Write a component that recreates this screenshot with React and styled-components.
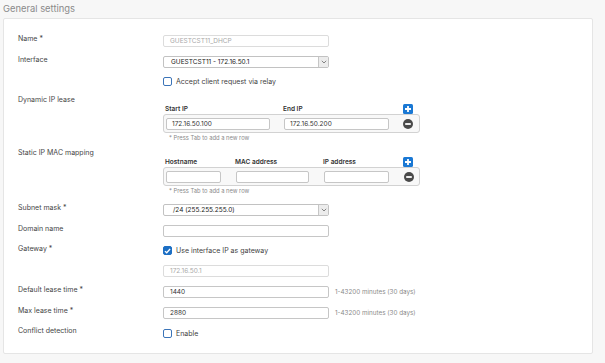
import React from 'react';
import styled, { createGlobalStyle } from 'styled-components';

const GlobalStyle = createGlobalStyle`
  html, body { margin: 0; padding: 0; background: #f7f7f7; }
  body { font-family: Inter, "Noto Sans", "Liberation Sans", sans-serif; }
  * { box-sizing: border-box; }
`;

const Page = styled.div`
  width: 605px;
  height: 363px;
  padding: 0 12px 0 3px;
  display: flex;
  flex-direction: column;
`;

const Title = styled.h2`
  margin: 0;
  height: 18px;
  line-height: 18px;
  font-size: 9.4px;
  font-weight: 400;
  color: #8a8a8a;
`;

const Card = styled.div`
  background: #fff;
  border: 1px solid #e5e5e5;
  border-radius: 2px;
  height: 336px;
  padding: 11px 0 0 14px;
  display: flex;
  flex-direction: column;
`;

const FieldRow = styled.div`
  display: grid;
  grid-template-columns: 145px auto;
  align-items: ${p => (p.$block ? 'start' : 'center')};
  height: ${p => p.$h}px;
  margin-top: ${p => p.$mt || 0}px;
`;

const Label = styled.div`
  font-size: 7px;
  line-height: 10px;
  color: #454545;
  padding-bottom: ${p => (p.$block ? 0 : 4)}px;
`;

const Control = styled.div`
  display: flex;
  align-items: center;
  gap: 6px;
`;

const TextInput = styled.div`
  width: 166px;
  height: 12px;
  border: 1px solid ${p => (p.$disabled ? '#dcdcdc' : '#c6c6c6')};
  border-radius: 2px;
  background: #fff;
  font-size: 6.5px;
  line-height: 10px;
  padding: 0 6px;
  color: ${p => (p.$disabled ? '#a9a9a9' : '#333')};
  white-space: nowrap;
  overflow: hidden;
`;

const SelectBox = styled.div`
  width: 166px;
  height: 12px;
  border: 1px solid #c2c2c2;
  border-radius: 2px;
  background: #fff;
  display: flex;
  align-items: stretch;
  overflow: hidden;
`;

const SelectValue = styled.div`
  flex: 1;
  font-size: 6.5px;
  line-height: 10px;
  padding-left: ${p => p.$indent || 7}px;
  color: #222;
  font-weight: 400;
  white-space: nowrap;
`;

const SelectArrow = styled.div`
  width: 10px;
  background: #ececec;
  border-left: 1px solid #c6c6c6;
  display: flex;
  align-items: center;
  justify-content: center;
`;

const Hint = styled.span`
  font-size: 6.3px;
  color: #8a8a8a;
  white-space: nowrap;
`;

const CheckLabel = styled.label`
  display: flex;
  align-items: center;
  gap: 4px;
  font-size: 7px;
  color: #3f3f3f;
`;

const CheckBox = styled.span`
  width: 9px;
  height: 9px;
  border-radius: 2px;
  border: 1px solid ${p => (p.$checked ? '#1c6fc4' : '#3b74b8')};
  background: ${p => (p.$checked ? '#1c6fc4' : '#fff')};
  display: inline-flex;
  align-items: center;
  justify-content: center;
`;

const Table = styled.div`
  width: 257px;
  padding-top: 8px;
  display: flex;
  flex-direction: column;
`;

const TableGrid = styled.div`
  display: grid;
  grid-template-columns: ${p => p.$cols} 1fr;
  column-gap: ${p => p.$gap}px;
  align-items: center;
`;

const HeaderRow = styled(TableGrid)`
  height: 11px;
  padding: 0 7px 0 2px;
`;

const HeadCell = styled.div`
  font-size: 6.5px;
  font-weight: 600;
  color: #333;
  white-space: nowrap;
`;

const BoxRow = styled(TableGrid)`
  height: 19px;
  border: 1px solid #d2d2d2;
  border-radius: 3px;
  background: #f8f8f8;
  padding: 0 6px 0 2px;
`;

const CellInput = styled.div`
  height: 12px;
  border: 1px solid #c6c6c6;
  border-radius: 2px;
  background: #fff;
  font-size: 6.5px;
  line-height: 10px;
  padding: 0 5px;
  color: #333;
`;

const ActionCell = styled.div`
  display: flex;
  justify-content: flex-end;
`;

const Note = styled.div`
  font-size: 5.8px;
  line-height: 9px;
  color: #8a8a8a;
  padding-left: 6px;
`;

const Chevron = () => (
  <svg width="6" height="4" viewBox="0 0 6 4">
    <path d="M0.8 0.8 L3 3 L5.2 0.8" fill="none" stroke="#777" strokeWidth="0.9" />
  </svg>
);

const Check = () => (
  <svg width="7" height="6" viewBox="0 0 7 6">
    <path d="M0.9 3.1 L2.7 4.8 L6.1 1" fill="none" stroke="#fff" strokeWidth="1.3" />
  </svg>
);

const PlusIcon = () => (
  <svg width="10" height="10" viewBox="0 0 10 10">
    <rect x="0" y="0" width="10" height="10" rx="1.5" fill="#1a78d4" />
    <path d="M5 2 V8 M2 5 H8" stroke="#fff" strokeWidth="1.8" />
  </svg>
);

const MinusIcon = () => (
  <svg width="10" height="10" viewBox="0 0 10 10">
    <circle cx="5" cy="5" r="5" fill="#4a4a4a" />
    <rect x="2.2" y="4.1" width="5.6" height="1.8" fill="#fff" />
  </svg>
);

const Select = ({ value, indent }) => (
  <SelectBox>
    <SelectValue $indent={indent}>{value}</SelectValue>
    <SelectArrow>
      <Chevron />
    </SelectArrow>
  </SelectBox>
);

const CheckField = ({ checked, children }) => (
  <CheckLabel>
    <CheckBox $checked={checked}>{checked && <Check />}</CheckBox>
    {children}
  </CheckLabel>
);

const MultiTable = ({ columns, gap, values }) => {
  const cols = columns.map(c => `${c.width}px`).join(' ');
  return (
    <Table>
      <HeaderRow $cols={cols} $gap={gap}>
        {columns.map(c => (
          <HeadCell key={c.title}>{c.title}</HeadCell>
        ))}
        <ActionCell>
          <PlusIcon />
        </ActionCell>
      </HeaderRow>
      <BoxRow $cols={cols} $gap={gap}>
        {columns.map((c, i) => (
          <CellInput key={c.title}>{values[i]}</CellInput>
        ))}
        <ActionCell>
          <MinusIcon />
        </ActionCell>
      </BoxRow>
      <Note>* Press Tab to add a new row</Note>
    </Table>
  );
};

export default function App() {
  return (
    <>
      <GlobalStyle />
      <Page>
        <Title>General settings</Title>
        <Card>
          <FieldRow $h={21}>
            <Label>Name *</Label>
            <Control>
              <TextInput $disabled>GUESTCST11_DHCP</TextInput>
            </Control>
          </FieldRow>
          <FieldRow $h={21}>
            <Label>Interface</Label>
            <Control>
              <Select value="GUESTCST11 - 172.16.50.1" />
            </Control>
          </FieldRow>
          <FieldRow $h={19}>
            <span />
            <Control>
              <CheckField>Accept client request via relay</CheckField>
            </Control>
          </FieldRow>
          <FieldRow $h={47} $mt={4} $block>
            <Label $block>Dynamic IP lease</Label>
            <MultiTable
              gap={14}
              columns={[
                { title: 'Start IP', width: 104 },
                { title: 'End IP', width: 105 },
              ]}
              values={['172.16.50.100', '172.16.50.200']}
            />
          </FieldRow>
          <FieldRow $h={47} $mt={6} $block>
            <Label $block>Static IP MAC mapping</Label>
            <MultiTable
              gap={15}
              columns={[
                { title: 'Hostname', width: 55 },
                { title: 'MAC address', width: 73 },
                { title: 'IP address', width: 65 },
              ]}
              values={['', '', '']}
            />
          </FieldRow>
          <FieldRow $h={21} $mt={4}>
            <Label>Subnet mask *</Label>
            <Control>
              <Select value="/24 (255.255.255.0)" indent={9} />
            </Control>
          </FieldRow>
          <FieldRow $h={21}>
            <Label>Domain name</Label>
            <Control>
              <TextInput />
            </Control>
          </FieldRow>
          <FieldRow $h={19}>
            <Label>Gateway *</Label>
            <Control>
              <CheckField checked>Use interface IP as gateway</CheckField>
            </Control>
          </FieldRow>
          <FieldRow $h={21}>
            <span />
            <Control>
              <TextInput $disabled>172.16.50.1</TextInput>
            </Control>
          </FieldRow>
          <FieldRow $h={21}>
            <Label>Default lease time *</Label>
            <Control>
              <TextInput>1440</TextInput>
              <Hint>1-43200 minutes (30 days)</Hint>
            </Control>
          </FieldRow>
          <FieldRow $h={21}>
            <Label>Max lease time *</Label>
            <Control>
              <TextInput>2880</TextInput>
              <Hint>1-43200 minutes (30 days)</Hint>
            </Control>
          </FieldRow>
          <FieldRow $h={20}>
            <Label>Conflict detection</Label>
            <Control>
              <CheckField>Enable</CheckField>
            </Control>
          </FieldRow>
        </Card>
      </Page>
    </>
  );
}
